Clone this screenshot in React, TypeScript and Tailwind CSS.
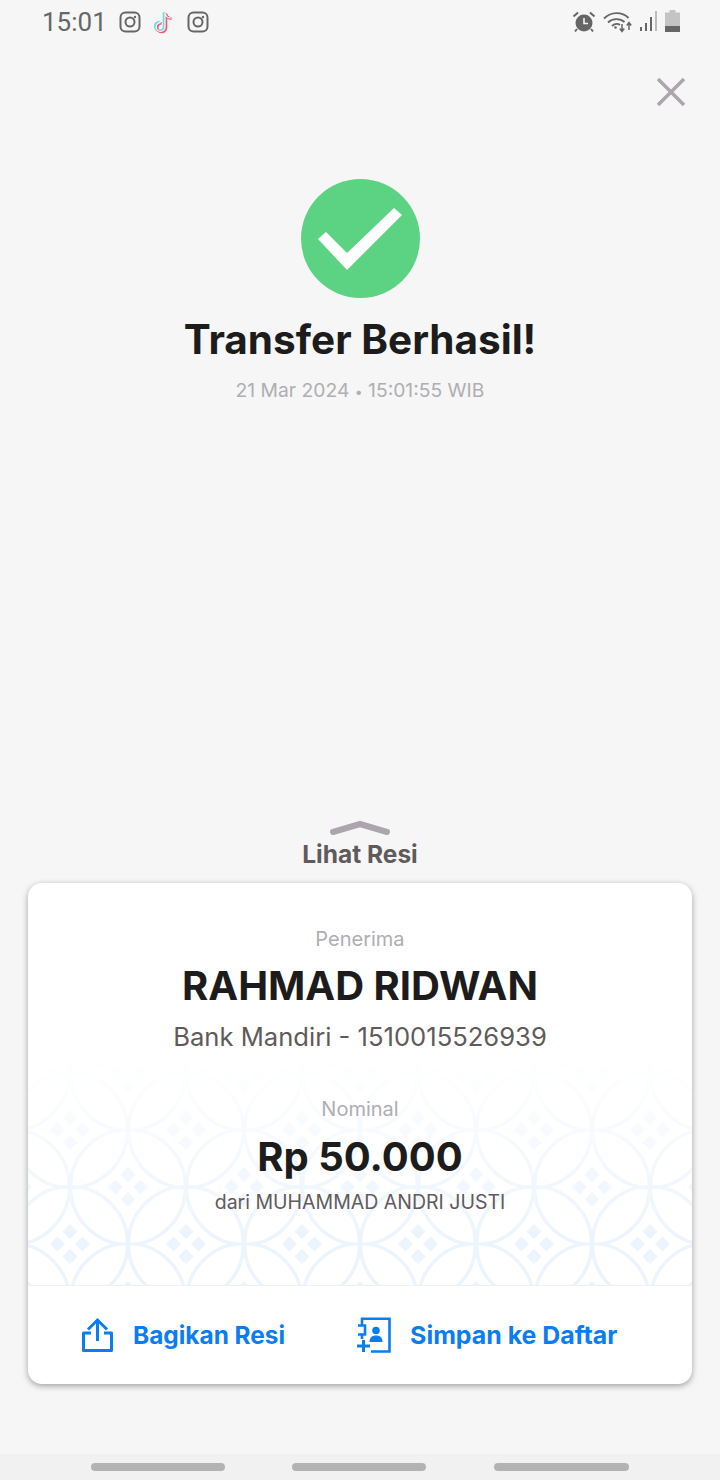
const Instagram = () => (
  <svg width="22" height="22" viewBox="0 0 22 22" fill="none" stroke="#666" strokeWidth="2">
    <rect x="1.5" y="1.5" width="19" height="19" rx="5" />
    <circle cx="11" cy="11" r="4.5" />
    <circle cx="16" cy="6" r="1.2" fill="#666" stroke="none" />
  </svg>
)

const TikTok = () => (
  <svg width="24" height="24" viewBox="0 0 24 24" fill="none" strokeWidth="2.6">
    <path d="M13 3v14a4.4 4.4 0 1 1-4.4-4.4M13 3c.5 3 2.6 5 5.6 5.2" stroke="#5fe3e6" transform="translate(-1 -.6)" />
    <path d="M13 3v14a4.4 4.4 0 1 1-4.4-4.4M13 3c.5 3 2.6 5 5.6 5.2" stroke="#f45a78" transform="translate(1 .6)" />
    <path d="M13 3v14a4.4 4.4 0 1 1-4.4-4.4M13 3c.5 3 2.6 5 5.6 5.2" stroke="#fff" strokeWidth="1.2" />
  </svg>
)

const Alarm = () => (
  <svg width="24" height="24" viewBox="0 0 24 24">
    <circle cx="12" cy="13" r="8.5" fill="#666" />
    <path d="M12 8v5.5h4" fill="none" stroke="#f6f6f6" strokeWidth="1.6" />
    <path d="M1.5 6.5 6 2.5M22.5 6.5 18 2.5M5 19l-2 2.5M19 19l2 2.5" stroke="#666" strokeWidth="2" />
  </svg>
)

const WifiData = () => (
  <svg width="30" height="24" viewBox="0 0 30 24" fill="none" stroke="#666" strokeWidth="1.8">
    <path d="M1 8.5C8 1.5 19 1.5 25.5 8" />
    <path d="M5 12.5c4.5-4.5 12-4.5 16.500-.5" />
    <path d="M9 16c2.500-2.500 6-2.500 8-1" />
    <circle cx="12.500" cy="17.500" r="1.300" fill="#666" stroke="none" />
    <path d="M19 14v7M16.800 18.500l2.200 3 2.200-3M26 20v-7M23.800 15.500l2.200-3 2.200 3" strokeWidth="1.500" />
  </svg>
)

const Signal = () => (
  <svg width="18" height="24" viewBox="0 0 18 24">
    <rect x="0" y="17" width="2" height="4" fill="#666" />
    <rect x="5" y="13" width="2" height="8" fill="#666" />
    <rect x="10" y="7" width="2" height="14" fill="#666" />
    <rect x="15" y="1" width="2" height="20" fill="#bbb" />
  </svg>
)

const Battery = () => (
  <svg width="15" height="24" viewBox="0 0 15 24">
    <path d="M4.500 0h6v2.500H15V22H0V2.500h4.500z" fill="#c4c4c4" />
    <path d="M0 16h15v6H0z" fill="#666" />
  </svg>
)

const ShareIcon = () => (
  <svg width="34" height="36" viewBox="0 0 34 36" fill="none" stroke="#0a7df2" strokeWidth="3">
    <path d="M11 16H3.500v17.500h28V16H24" strokeLinejoin="round" />
    <path d="M17.500 24V3M8 12.500 17.500 3 27 12.500" />
  </svg>
)

const AddContactIcon = () => (
  <svg width="36" height="36" viewBox="0 0 36 36" fill="none" stroke="#0a7df2" strokeWidth="2.600">
    <path d="M6 8V1.800h27.500v32.700H15" />
    <path d="M2 8.500h7v9H2M6 17.500V22" />
    <path d="M1 29h13M7.500 23v12" strokeWidth="3" />
    <circle cx="20" cy="13.500" r="3.800" fill="#0a7df2" stroke="none" />
    <path d="M13.500 25c0-4.500 2.500-6.500 6.500-6.500s6.500 2 6.500 6.500z" fill="#0a7df2" stroke="none" />
  </svg>
)

// four small diamonds in the middle of each star of the batik pattern
const Cluster = ({ cx, cy }: { cx: number; cy: number }) => (
  <g fill="#ecf4fd">
    {[[0, -12.5], [0, 12.5], [-12.5, 0], [12.5, 0]].map(([dx, dy]) => (
      <path key={`${dx}${dy}`} d={`M${cx + dx} ${cy + dy - 7.5}l7.500 7.500-7.500 7.500-7.500-7.500z`} />
    ))}
  </g>
)

const Kawung = () => (
  <svg className="absolute inset-0 h-full w-full" aria-hidden="true">
    <defs>
      <pattern id="kawung" x="42" y="75" width="116" height="114" patternUnits="userSpaceOnUse">
        <g fill="none" stroke="#ecf4fd" strokeWidth="3.500">
          <circle cx="0" cy="0" r="57.500" />
          <circle cx="116" cy="0" r="57.500" />
          <circle cx="0" cy="114" r="57.500" />
          <circle cx="116" cy="114" r="57.500" />
          <circle cx="58" cy="57" r="57.500" />
        </g>
        <Cluster cx={58} cy={57} />
        <Cluster cx={0} cy={0} />
        <Cluster cx={116} cy={0} />
        <Cluster cx={0} cy={114} />
        <Cluster cx={116} cy={114} />
      </pattern>
      <linearGradient id="fade" x1="0" y1="0" x2="0" y2="1">
        <stop offset="0" stopColor="#fff" stopOpacity="0" />
        <stop offset="0.8" stopColor="#fff" stopOpacity="1" />
      </linearGradient>
      <mask id="kawung-mask">
        <rect width="100%" height="100%" fill="url(#fade)" />
      </mask>
    </defs>
    <rect width="100%" height="100%" fill="url(#kawung)" mask="url(#kawung-mask)" />
  </svg>
)

export default function App() {
  return (
    <div className="flex h-[1480px] w-[720px] flex-col overflow-hidden bg-[#f6f6f6] font-['Inter','Noto_Sans',sans-serif]">
      <div className="flex h-11 shrink-0 items-center justify-between pl-[42px] pr-[40px] font-['Roboto',sans-serif]">
        <div className="flex items-center">
          <span className="mr-[12px] text-[26px] leading-none text-[#666]">15:01</span>
          <div className="flex items-center gap-[11px]">
            <Instagram />
            <TikTok />
            <Instagram />
          </div>
        </div>
        <div className="flex items-center gap-[7px]">
          <Alarm />
          <WifiData />
          <Signal />
          <Battery />
        </div>
      </div>

      <div className="flex justify-end pr-[35px] pt-[34px]">
        <svg width="28" height="28" viewBox="0 0 28 28" fill="none" stroke="#aca5ae" strokeWidth="3.500">
          <path d="M1 1l26 26M27 1 1 27" />
        </svg>
      </div>

      <div className="mt-[73px] flex flex-col items-center">
        <div className="flex h-[119px] w-[119px] items-center justify-center rounded-full bg-[#5cd383]">
          <svg width="84" height="62" viewBox="0 0 84 62" fill="#fff">
            <path d="M0 31l8-7 21 21L76 0l8 7-55 55z" />
          </svg>
        </div>
        <h1 className="mt-[18px] text-[40.5px] leading-[48px] font-bold text-[#1c1c1c]">Transfer Berhasil!</h1>
        <p className="mt-[12px] text-[19.3px] leading-[28px] text-[#aeaeb3]">
          21 Mar 2024 <span className="text-[14px]">•</span> 15:01:55 WIB
        </p>
      </div>

      <div className="mt-auto flex flex-col items-center">
        <svg width="62" height="16" viewBox="0 0 62 16" fill="none" stroke="#aca5ae" strokeWidth="6" strokeLinecap="round">
          <path d="M4 12 31 4l27 8" />
        </svg>
        <div className="mt-[2px] text-[24.5px] leading-[32px] font-bold text-[#5f5a5c]">Lihat Resi</div>
      </div>

      <div className="mx-7 mt-[13px] mb-[70px] flex h-[501px] shrink-0 flex-col overflow-hidden rounded-[14px] bg-white shadow-[0_2px_6px_rgba(0,0,0,0.35)]">
        <div className="relative flex h-[402px] flex-col items-center">
          <div className="absolute inset-x-0 bottom-0 top-[172px]">
            <Kawung />
          </div>
          <div className="relative flex flex-col items-center pt-[42px]">
            <div className="text-[20px] leading-[28px] text-[#aeaeb3]">Penerima</div>
            <div className="mt-[8px] text-[40px] leading-[50px] font-bold text-[#1c1c1c]">RAHMAD RIDWAN</div>
            <div className="mt-[8px] text-[25.6px] leading-[36px] text-[#5f5a5c]">Bank Mandiri - 1510015526939</div>
            <div className="mt-[40px] text-[20px] leading-[28px] text-[#aeaeb3]">Nominal</div>
            <div className="mt-[9px] text-[40px] leading-[50px] font-bold text-[#1c1c1c]">Rp 50.000</div>
            <div className="mt-[6px] text-[19.5px] leading-[28px] text-[#5f5a5c]">dari MUHAMMAD ANDRI JUSTI</div>
          </div>
        </div>
        <div className="flex flex-1 items-center border-t border-[#f0f0f0] pl-[52px]">
          <ShareIcon />
          <span className="ml-[19px] mt-[1px] text-[24.4px] font-bold text-[#0a7df2]">Bagikan Resi</span>
          <div className="ml-[71px]">
            <AddContactIcon />
          </div>
          <span className="ml-[18px] mt-[1px] text-[24.9px] font-bold text-[#0a7df2]">Simpan ke Daftar</span>
        </div>
      </div>

      <div className="flex h-[26px] shrink-0 items-center bg-[#f1f1f1] pl-[91px]">
        <div className="h-[8px] w-[134px] rounded bg-[#b3b3b3]" />
        <div className="ml-[67px] h-[8px] w-[134px] rounded bg-[#b3b3b3]" />
        <div className="ml-[68px] h-[8px] w-[135px] rounded bg-[#b3b3b3]" />
      </div>
    </div>
  )
}
